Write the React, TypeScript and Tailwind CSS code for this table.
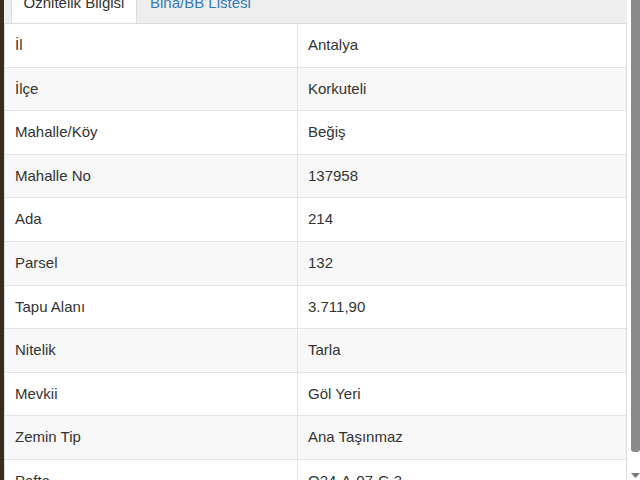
const rows: [string, string][] = [
  ["İl", "Antalya"],
  ["İlçe", "Korkuteli"],
  ["Mahalle/Köy", "Beğiş"],
  ["Mahalle No", "137958"],
  ["Ada", "214"],
  ["Parsel", "132"],
  ["Tapu Alanı", "3.711,90"],
  ["Nitelik", "Tarla"],
  ["Mevkii", "Göl Yeri"],
  ["Zemin Tip", "Ana Taşınmaz"],
  ["Pafta", "O24-A-07-C-3"],
]

export default function App() {
  return (
    <div className="flex h-[480px] w-[640px] overflow-hidden bg-white font-['Liberation_Sans',Arial,sans-serif] text-[15px] text-[#333]">
      {/* arka plan şeridi */}
      <div className="w-[4px] shrink-0 bg-[#3a2b1f]" />

      <div className="flex w-[623px] shrink-0 flex-col">
        {/* sekmeler */}
        <div className="-mt-[20px] flex h-[44px] shrink-0 items-stretch gap-[2px] border-b border-[#ddd] bg-[#eee] pl-[7px]">
          <div className="flex w-[126px] items-center justify-center border-x border-t border-[#ddd] bg-white pt-[3px]">
            Öznitelik Bilgisi
          </div>
          <div className="flex items-center px-[11px] pt-[3px] text-[#337ab7]">Bina/BB Listesi</div>
        </div>

        {/* öznitelik tablosu */}
        <div className="flex flex-col border-x border-[#ddd]">
          {rows.map(([label, value], i) => (
            <div
              key={label}
              className={
                "flex h-[43.6px] shrink-0 border-b border-[#e4e4e4] " +
                (i % 2 === 1 ? "bg-[#f8f8f8]" : "bg-white")
              }
            >
              <div className="flex w-[293px] shrink-0 items-center border-r border-[#e4e4e4] pl-[10px]">
                {label}
              </div>
              <div className="flex items-center pl-[10px]">{value}</div>
            </div>
          ))}
        </div>
      </div>

      <div className="w-[4px] shrink-0 bg-white" />

      {/* kaydırma çubuğu */}
      <div className="flex w-[9px] shrink-0 flex-col items-center">
        <div className="h-[452px] w-full rounded-b-[3px] bg-[#8a8a8a]" />
        <div className="flex-1" />
        <svg width="9" height="6" viewBox="0 0 9 6" className="mb-[1px]">
          <polygon points="0,0 9,0 4.5,5" fill="#7a7a7a" />
        </svg>
      </div>
    </div>
  )
}
